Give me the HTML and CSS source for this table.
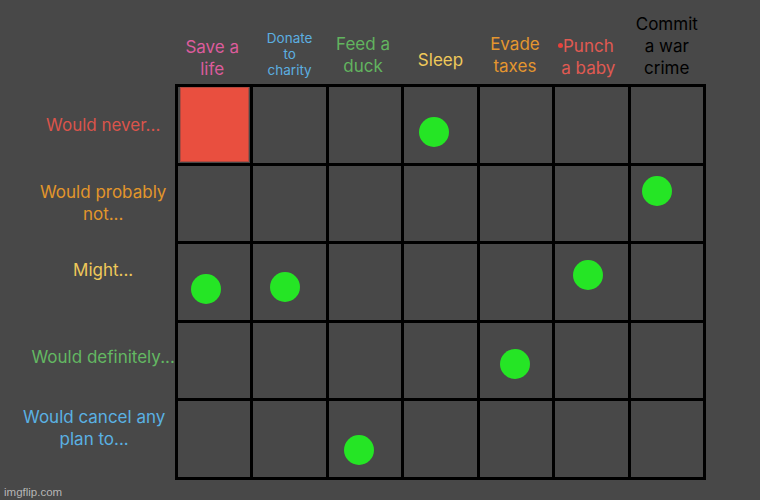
FILE: index.html
```html
<!DOCTYPE html>
<html>
<head>
<meta charset="utf-8">
<link rel="stylesheet" href="styles.css">
</head>
<body>
<div class="page">
  <div class="corner"></div>
  <div class="heads">
    <div class="head"><span class="h h-save">Save a<br>life</span></div>
    <div class="head"><span class="h h-donate">Donate<br>to<br>charity</span></div>
    <div class="head"><span class="h h-feed">Feed a<br>duck</span></div>
    <div class="head"><span class="h h-sleep">Sleep</span></div>
    <div class="head"><span class="h h-evade">Evade<br>taxes</span></div>
    <div class="head"><span class="h h-punch">Punch<br>a baby</span></div>
    <div class="head"><span class="h h-commit">Commit<br>a war<br>crime</span></div>
  </div>
  <div class="rows">
    <div class="rl"><span class="l l-never">Would never...</span></div>
    <div class="rl"><span class="l l-prob">Would probably<br>not...</span></div>
    <div class="rl"><span class="l l-might">Might...</span></div>
    <div class="rl"><span class="l l-def">Would definitely...</span></div>
    <div class="rl"><span class="l l-cancel">Would cancel any<br>plan to...</span></div>
  </div>
  <div class="board">
    <div class="cell"><div class="red"></div></div>
    <div class="cell"></div>
    <div class="cell"></div>
    <div class="cell"><span class="dot d1"></span></div>
    <div class="cell"></div>
    <div class="cell"></div>
    <div class="cell"></div>

    <div class="cell"></div>
    <div class="cell"></div>
    <div class="cell"></div>
    <div class="cell"></div>
    <div class="cell"></div>
    <div class="cell"></div>
    <div class="cell"><span class="dot d2"></span></div>

    <div class="cell"><span class="dot d3"></span></div>
    <div class="cell"><span class="dot d4"></span></div>
    <div class="cell"></div>
    <div class="cell"></div>
    <div class="cell"></div>
    <div class="cell"><span class="dot d5"></span></div>
    <div class="cell"></div>

    <div class="cell"></div>
    <div class="cell"></div>
    <div class="cell"></div>
    <div class="cell"></div>
    <div class="cell"><span class="dot d6"></span></div>
    <div class="cell"></div>
    <div class="cell"></div>

    <div class="cell"></div>
    <div class="cell"></div>
    <div class="cell"><span class="dot d7"></span></div>
    <div class="cell"></div>
    <div class="cell"></div>
    <div class="cell"></div>
    <div class="cell"></div>
  </div>
</div>
<div class="wm">imgflip.com</div>
</body>
</html>
```
FILE: styles.css
```css
html, body {
  margin: 0;
  padding: 0;
  background: #484848;
}
body {
  width: 760px;
  height: 500px;
  overflow: hidden;
  position: relative;
  font-family: Inter, "Liberation Sans", Arial, sans-serif;
}
.page {
  display: grid;
  grid-template-columns: 175px 531px;
  grid-template-rows: 84px 396px;
}
.heads {
  display: grid;
  grid-template-columns: repeat(7, 1fr);
  column-gap: 3px;
  padding: 0 3px;
}
.head {
  display: flex;
  flex-direction: column;
  justify-content: flex-end;
  align-items: center;
  text-align: center;
}
.h {
  font-size: 17px;
  line-height: 22px;
  position: relative;
  white-space: nowrap;
}
.h-save { color: #dc5c9c; padding-bottom: 4px; margin-right: 4px; }
.h-donate { color: #5cafe0; font-size: 13.5px; line-height: 16px; padding-bottom: 6px; }
.h-feed { color: #62b45f; padding-bottom: 7px; margin-right: 4px; }
.h-sleep { color: #efc95a; padding-bottom: 13px; }
.h-evade { color: #e4962f; padding-bottom: 7px; margin-right: 2px; }
.h-punch { color: #e05a52; padding-bottom: 5px; margin-right: 6px; }
.h-punch::before {
  content: "";
  position: absolute;
  left: -3px;
  top: 8px;
  width: 5px;
  height: 5px;
  border-radius: 50%;
  background: #e8403a;
}
.h-commit { color: #000; padding-bottom: 5px; }

.rows {
  display: grid;
  grid-template-rows: repeat(5, 1fr);
  row-gap: 3px;
  padding: 3px 0 3px 23px;
}
.rl {
  display: flex;
  align-items: center;
  justify-content: center;
  text-align: center;
}
.l {
  font-size: 17px;
  line-height: 22px;
  white-space: nowrap;
}
.l-never { color: #da544b; }
.l-prob { color: #e2962b; }
.l-might { color: #efc85a; margin-bottom: 24px; }
.l-def { color: #63b862; margin-bottom: 8px; }
.l-cancel { color: #5ab1e3; margin-bottom: 22px; margin-right: 18px; }

.board {
  display: grid;
  grid-template-columns: repeat(7, 1fr);
  grid-template-rows: repeat(5, 1fr);
  gap: 3px;
  padding: 3px;
  background: #000;
}
.cell {
  background: #484848;
  position: relative;
}
.red {
  position: absolute;
  left: 2px;
  top: 0;
  right: 1px;
  bottom: 1px;
  background: #e94f3f;
  border: 1px solid #b04a40;
}
.dot {
  position: absolute;
  width: 30px;
  height: 30px;
  border-radius: 50%;
  background: #25e525;
}
.d1 { left: 15px; top: 30px; }
.d2 { left: 11px; top: 10px; }
.d3 { left: 13px; top: 30px; }
.d4 { left: 17px; top: 28px; }
.d5 { left: 18px; top: 16px; }
.d6 { left: 20px; top: 26px; }
.d7 { left: 15px; top: 34px; }

.wm {
  position: absolute;
  left: 4px;
  bottom: 2px;
  font-size: 11.5px;
  color: rgba(220, 220, 220, 0.75);
  font-family: "Liberation Sans", Arial, sans-serif;
}
```
